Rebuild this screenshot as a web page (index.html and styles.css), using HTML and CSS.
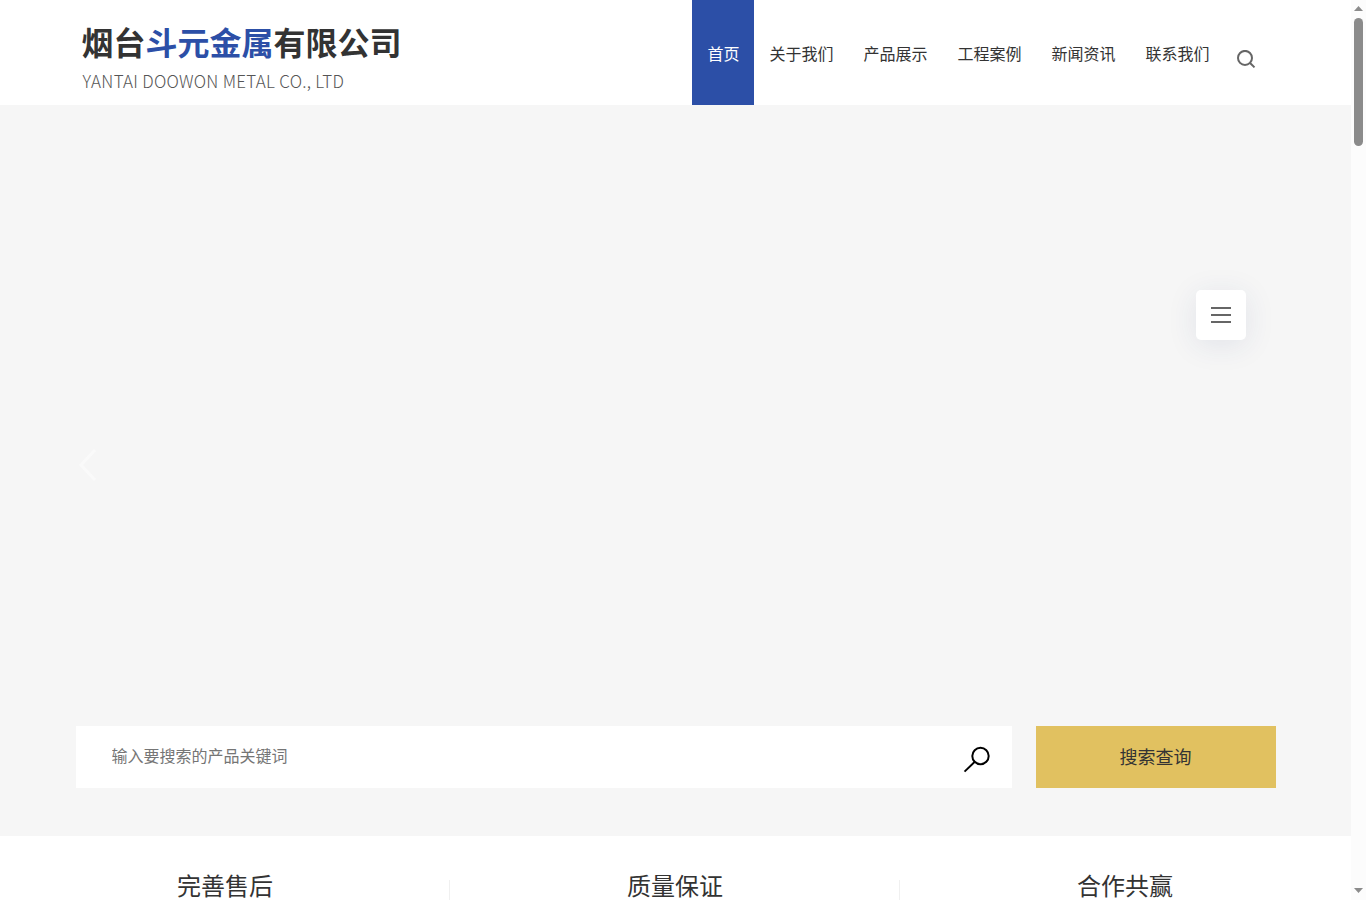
FILE: index.html
```
<!DOCTYPE html>
<html lang="zh-CN">
<head>
    <meta charset="utf-8">
    <title>烟台斗元金属有限公司</title>
    <link rel="stylesheet" href="styles.css">
</head>

<body>
<div class="page">
    <header class="header">
        <div class="container header-inner">
            <a class="logo" href="#">
                <span class="logo-cn">烟台<em>斗元金属</em>有限公司</span>
                <span class="logo-en">YANTAI DOOWON METAL CO., LTD</span>
            </a>
            <nav class="nav">
                <a class="active" href="#">首页</a>
                <a href="#">关于我们</a>
                <a href="#">产品展示</a>
                <a href="#">工程案例</a>
                <a href="#">新闻资讯</a>
                <a href="#">联系我们</a>
            </nav>
            <svg class="nav-search" width="20" height="20" viewBox="0 0 20 20">
                <circle cx="9" cy="7.9" r="7"/>
                <path d="M13.8 12.7 L18.5 17.4"/>
            </svg>
        </div>
    </header>

    <section class="banner">
        <svg class="prev" width="20" height="36" viewBox="0 0 20 36">
            <path d="M17 3 L3 18 L17 33"/>
        </svg>
        <div class="side-menu"><i></i><i></i><i></i></div>

        <form class="container search">
            <div class="search-box">
                <input type="text" placeholder="输入要搜索的产品关键词">
                <svg width="28" height="28" viewBox="0 0 28 28">
                    <circle cx="17.5" cy="10" r="8.2"/>
                    <path d="M11.8 15.8 L1.5 25.6"/>
                </svg>
            </div>
            <button type="button">搜索查询</button>
        </form>
    </section>

    <section class="features">
        <div class="feature">完善售后</div>
        <div class="feature">质量保证</div>
        <div class="feature">合作共赢</div>
    </section>
</div>

<div class="scrollbar">
    <svg width="9" height="5" viewBox="0 0 9 5"><path d="M0 5 L4.5 0 L9 5 Z"/></svg>
    <div class="thumb"></div>
    <svg class="down" width="9" height="5" viewBox="0 0 9 5"><path d="M0 0 L4.5 5 L9 0 Z"/></svg>
</div>
</body>
</html>
```
FILE: styles.css
```
* {
    box-sizing: border-box;
}
body {
    display: flex;
    height: 900px;
    margin: 0;
    overflow: hidden;
    background-color: #fff;
    color: #333;
    font-family: "Noto Sans CJK SC", sans-serif;
    font-size: 16px;
}
a {
    color: inherit;
    text-decoration: none;
}
.page {
    width: 1351px;
    height: 900px;
    overflow: hidden;
}
.container {
    width: 1200px;
    margin: 0 auto;
}
.header {
    height: 105px;
}
.header-inner {
    display: flex;
    height: 105px;
}
.logo {
    width: 616px;
    padding: 18px 0 0 6px;
}
.logo-cn {
    display: block;
    color: #333;
    font-size: 32px;
    font-weight: bold;
    line-height: 46px;
}
.logo-cn em {
    color: #2c4fa7;
    font-style: normal;
}
.logo-en {
    display: block;
    margin: 5px 0 0 1px;
    color: #555;
    font-size: 17px;
    font-weight: 300;
    line-height: 24px;
    letter-spacing: 0.27px;
}
.nav {
    display: flex;
}
.nav a {
    height: 105px;
    padding: 0 14px 0 16px;
    line-height: 106px;
}
.nav .active {
    background-color: #2c4fa7;
    color: #fff;
}
.nav-search {
    margin: 50px 0 0 12px;
    fill: none;
    stroke: #666;
    stroke-width: 2;
}
.banner {
    position: relative;
    height: 731px;
    padding-top: 621px;
    background-color: #f6f6f6;
}
.prev {
    position: absolute;
    top: 342px;
    left: 78px;
    fill: none;
    stroke: #fafafa;
    stroke-width: 3;
}
.side-menu {
    position: absolute;
    top: 185px;
    left: 1196px;
    display: flex;
    flex-direction: column;
    gap: 5px;
    width: 50px;
    height: 50px;
    padding: 17px 15px;
    border-radius: 5px;
    background-color: #fff;
    box-shadow: 0 5px 30px rgba(40, 60, 120, 0.1);
}
.side-menu i {
    width: 20px;
    height: 2px;
    background-color: #666;
}
.search {
    display: flex;
    justify-content: space-between;
}
.search-box {
    display: flex;
    width: 936px;
    height: 62px;
    padding: 0 21px 0 36px;
    background-color: #fff;
}
.search-box input {
    flex: 1;
    height: 58px;
    padding: 0;
    border: none;
    outline: none;
    background: none;
    font-family: inherit;
    font-size: 16px;
}
.search-box input::placeholder {
    color: #757575;
}
.search-box svg {
    margin-top: 20px;
    fill: none;
    stroke: #000;
    stroke-width: 2;
}
.search button {
    width: 240px;
    height: 62px;
    padding: 0 0 2px;
    border: none;
    background-color: #e1c160;
    color: #333;
    font-family: inherit;
    font-size: 18px;
    cursor: pointer;
}
.features {
    display: flex;
    padding-top: 31px;
}
.feature {
    position: relative;
    width: 450px;
    font-size: 24px;
    line-height: 36px;
    text-align: center;
}
.feature:not(:last-child)::after {
    content: "";
    position: absolute;
    top: 13px;
    right: 0;
    width: 1px;
    height: 80px;
    background-color: #f0f0f0;
}
.scrollbar {
    display: flex;
    flex-direction: column;
    align-items: center;
    width: 15px;
    height: 900px;
    padding: 6px 0 7px;
    background-color: #fcfcfc;
    fill: #8b8b8b;
}
.thumb {
    width: 9px;
    height: 128px;
    margin-top: 7px;
    border-radius: 5px;
    background-color: #8b8b8b;
}
.down {
    margin-top: auto;
}
```
